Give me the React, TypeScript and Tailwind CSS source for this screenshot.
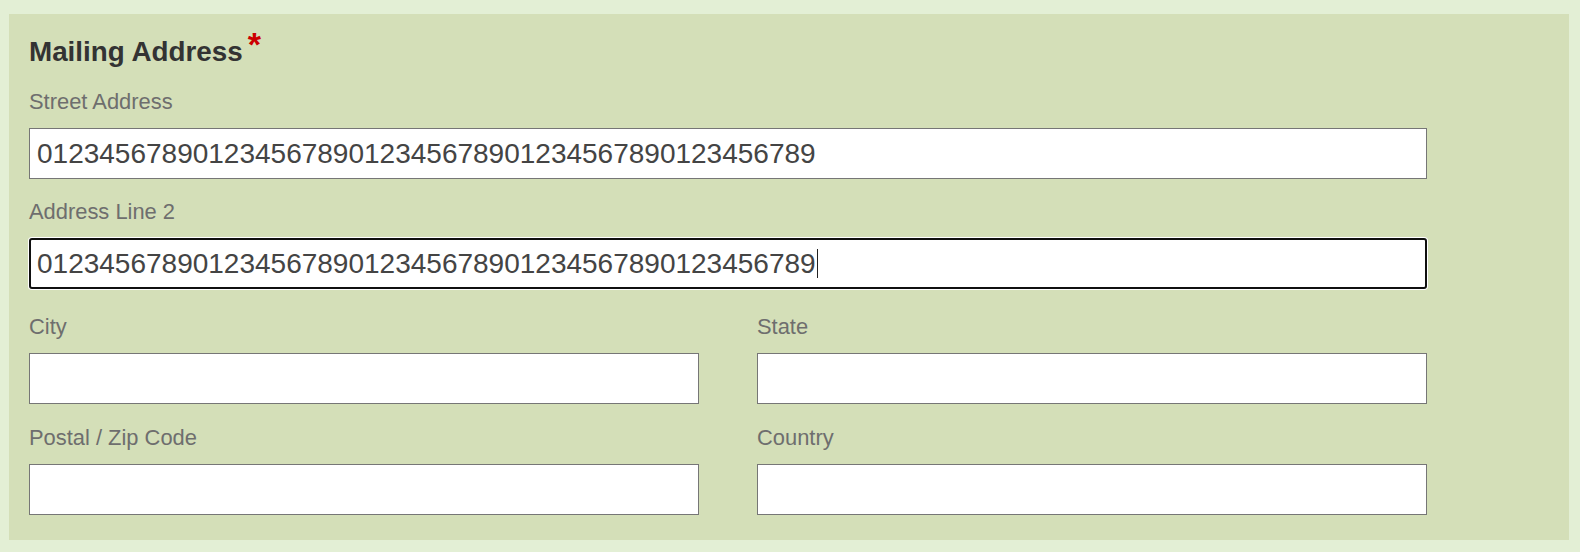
import React from "react";

const digits = "01234567890123456789012345678901234567890123456789";

function Label({ children }: { children: React.ReactNode }) {
  return (
    <label className="mb-[13px] block text-[21.9px] leading-[26px] text-[#6e6e6e]">
      {children}
    </label>
  );
}

function Field({
  label,
  value,
  className = "",
}: {
  label: string;
  value?: string;
  className?: string;
}) {
  return (
    <div className={className}>
      <Label>{label}</Label>
      <input
        type="text"
        defaultValue={value}
        className="block h-[51px] w-full border border-[#767676] bg-white pl-[7px] text-[28px] text-[#444] outline-none"
      />
    </div>
  );
}

export default function App() {
  return (
    <main
      className="min-h-[552px] w-full bg-[#e3efd5] pb-[12px] pl-[9px] pr-[11px] pt-[14px]"
      style={{ fontFamily: '"Liberation Sans", Arial, sans-serif' }}
    >
      <section className="h-[526px] bg-[#d4dfb8] pl-[20px] pt-[21px]">
        <div className="flex w-[1398px] flex-col">
          <h2 className="flex text-[27.8px] font-bold leading-[34px] text-[#333]">
            Mailing Address
            <span className="relative top-[-8px] ml-[5px] text-[34px] leading-[34px] text-[#c00]">
              *
            </span>
          </h2>

          <Field className="mt-[20px]" label="Street Address" value={digits} />

          {/* focused field */}
          <div className="mt-[20px]">
            <Label>Address Line 2</Label>
            <div className="flex h-[51px] w-full items-center rounded-[3px] border-2 border-[#101010] bg-white pl-[6px] text-[28px] text-[#444] shadow-[0_0_0_1px_#ffffff]">
              <span>{digits}</span>
              <span className="ml-px h-[29px] w-px bg-[#222]" />
            </div>
          </div>

          <div className="mt-[25px] grid grid-cols-[670px_670px] gap-x-[58px] gap-y-[21px]">
            <Field label="City" />
            <Field label="State" />
            <Field label="Postal / Zip Code" />
            <Field label="Country" />
          </div>
        </div>
      </section>
    </main>
  );
}
